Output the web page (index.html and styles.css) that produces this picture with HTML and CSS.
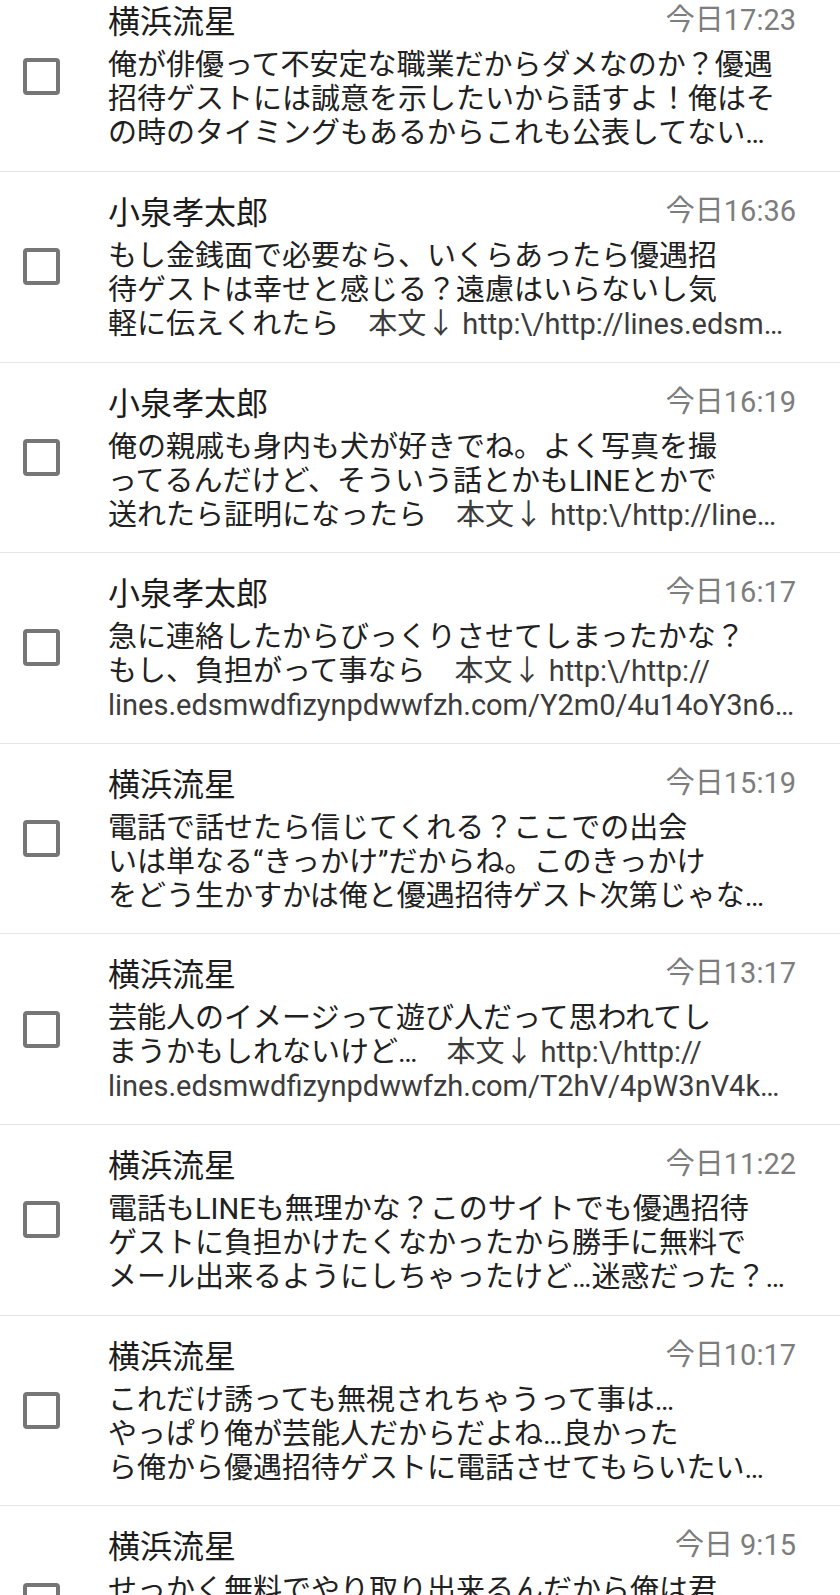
FILE: index.html
```html
<!DOCTYPE html>
<html lang="ja">
<head>
    <meta charset="UTF-8">
    <meta name="viewport" content="width=device-width, initial-scale=1.0">
    <title>受信箱</title>
    <link rel="stylesheet" href="styles.css">
</head>
<body>
    <ul class="mail-list">
        <li class="mail">
            <input type="checkbox" class="check">
            <div class="mail-body">
                <div class="mail-head">
                    <span class="sender">横浜流星</span>
                    <span class="time">今日17:23</span>
                </div>
                <div class="preview">
                    <div class="line">俺が俳優って不安定な職業だからダメなのか？優遇</div>
                    <div class="line">招待ゲストには誠意を示したいから話すよ！俺はそ</div>
                    <div class="line">の時のタイミングもあるからこれも公表してない…</div>
                </div>
            </div>
        </li>
        <li class="mail">
            <input type="checkbox" class="check">
            <div class="mail-body">
                <div class="mail-head">
                    <span class="sender">小泉孝太郎</span>
                    <span class="time">今日16:36</span>
                </div>
                <div class="preview">
                    <div class="line">もし金銭面で必要なら、いくらあったら優遇招</div>
                    <div class="line">待ゲストは幸せと感じる？遠慮はいらないし気</div>
                    <div class="line">軽に伝えくれたら　<span class="link">本文↓ http:\/http://lines.edsm…</span></div>
                </div>
            </div>
        </li>
        <li class="mail">
            <input type="checkbox" class="check">
            <div class="mail-body">
                <div class="mail-head">
                    <span class="sender">小泉孝太郎</span>
                    <span class="time">今日16:19</span>
                </div>
                <div class="preview">
                    <div class="line">俺の親戚も身内も犬が好きでね。よく写真を撮</div>
                    <div class="line">ってるんだけど、そういう話とかもLINEとかで</div>
                    <div class="line">送れたら証明になったら　<span class="link">本文↓ http:\/http://line…</span></div>
                </div>
            </div>
        </li>
        <li class="mail">
            <input type="checkbox" class="check">
            <div class="mail-body">
                <div class="mail-head">
                    <span class="sender">小泉孝太郎</span>
                    <span class="time">今日16:17</span>
                </div>
                <div class="preview">
                    <div class="line">急に連絡したからびっくりさせてしまったかな？</div>
                    <div class="line">もし、負担がって事なら　<span class="link">本文↓ http:\/http://</span></div>
                    <div class="line link">lines.edsmwdfizynpdwwfzh.com/Y2m0/4u14oY3n6…</div>
                </div>
            </div>
        </li>
        <li class="mail">
            <input type="checkbox" class="check">
            <div class="mail-body">
                <div class="mail-head">
                    <span class="sender">横浜流星</span>
                    <span class="time">今日15:19</span>
                </div>
                <div class="preview">
                    <div class="line">電話で話せたら信じてくれる？ここでの出会</div>
                    <div class="line">いは単なる“きっかけ”だからね。このきっかけ</div>
                    <div class="line">をどう生かすかは俺と優遇招待ゲスト次第じゃな…</div>
                </div>
            </div>
        </li>
        <li class="mail">
            <input type="checkbox" class="check">
            <div class="mail-body">
                <div class="mail-head">
                    <span class="sender">横浜流星</span>
                    <span class="time">今日13:17</span>
                </div>
                <div class="preview">
                    <div class="line">芸能人のイメージって遊び人だって思われてし</div>
                    <div class="line">まうかもしれないけど…　<span class="link">本文↓ http:\/http://</span></div>
                    <div class="line link">lines.edsmwdfizynpdwwfzh.com/T2hV/4pW3nV4k…</div>
                </div>
            </div>
        </li>
        <li class="mail">
            <input type="checkbox" class="check">
            <div class="mail-body">
                <div class="mail-head">
                    <span class="sender">横浜流星</span>
                    <span class="time">今日11:22</span>
                </div>
                <div class="preview">
                    <div class="line">電話もLINEも無理かな？このサイトでも優遇招待</div>
                    <div class="line">ゲストに負担かけたくなかったから勝手に無料で</div>
                    <div class="line">メール出来るようにしちゃったけど…迷惑だった？…</div>
                </div>
            </div>
        </li>
        <li class="mail">
            <input type="checkbox" class="check">
            <div class="mail-body">
                <div class="mail-head">
                    <span class="sender">横浜流星</span>
                    <span class="time">今日10:17</span>
                </div>
                <div class="preview">
                    <div class="line">これだけ誘っても無視されちゃうって事は…</div>
                    <div class="line">やっぱり俺が芸能人だからだよね…良かった</div>
                    <div class="line">ら俺から優遇招待ゲストに電話させてもらいたい…</div>
                </div>
            </div>
        </li>
        <li class="mail">
            <input type="checkbox" class="check">
            <div class="mail-body">
                <div class="mail-head">
                    <span class="sender">横浜流星</span>
                    <span class="time">今日 9:15</span>
                </div>
                <div class="preview">
                    <div class="line">せっかく無料でやり取り出来るんだから俺は君</div>
                </div>
            </div>
        </li>
    </ul>
</body>
</html>
```

FILE: styles.css
```css
body {
    margin: 0;
    background-color: #fff;
    font-family: Roboto, "Noto Sans CJK JP", sans-serif;
    color: #212121;
    overflow: hidden;
}

/* list is scrolled a little, first row starts above the top edge */
.mail-list {
    list-style: none;
    margin: -18.6px 0 0;
    padding: 0;
}

.mail {
    display: flex;
    align-items: center;
    gap: 48px;
    padding: 0 44px 0 23px;
    border-bottom: 1px solid #e6e6e6;
}

.mail:last-child {
    align-items: flex-start;
}

.mail:last-child .check {
    margin-top: 77px;
}

.check {
    appearance: none;
    -webkit-appearance: none;
    flex: none;
    width: 37px;
    height: 37px;
    margin: 0;
    border: 4px solid #767676;
    border-radius: 4px;
    box-sizing: border-box;
    background: #fff;
}

.mail-body {
    flex: 1;
    min-width: 0;
    padding: 21px 0 20.6px;
}

.mail-head {
    display: flex;
    justify-content: space-between;
    align-items: center;
    height: 40px;
    margin-bottom: 6px;
}

.sender {
    font-size: 32px;
    line-height: 40px;
    color: #1c1c1c;
}

.time {
    font-size: 29px;
    line-height: 40px;
    color: #7d7d7d;
    margin-top: -4px;
}

.preview {
    font-size: 29px;
    line-height: 34px;
}

.line {
    white-space: nowrap;
    overflow: hidden;
}

.link {
    color: #3c3c3c;
}
```
